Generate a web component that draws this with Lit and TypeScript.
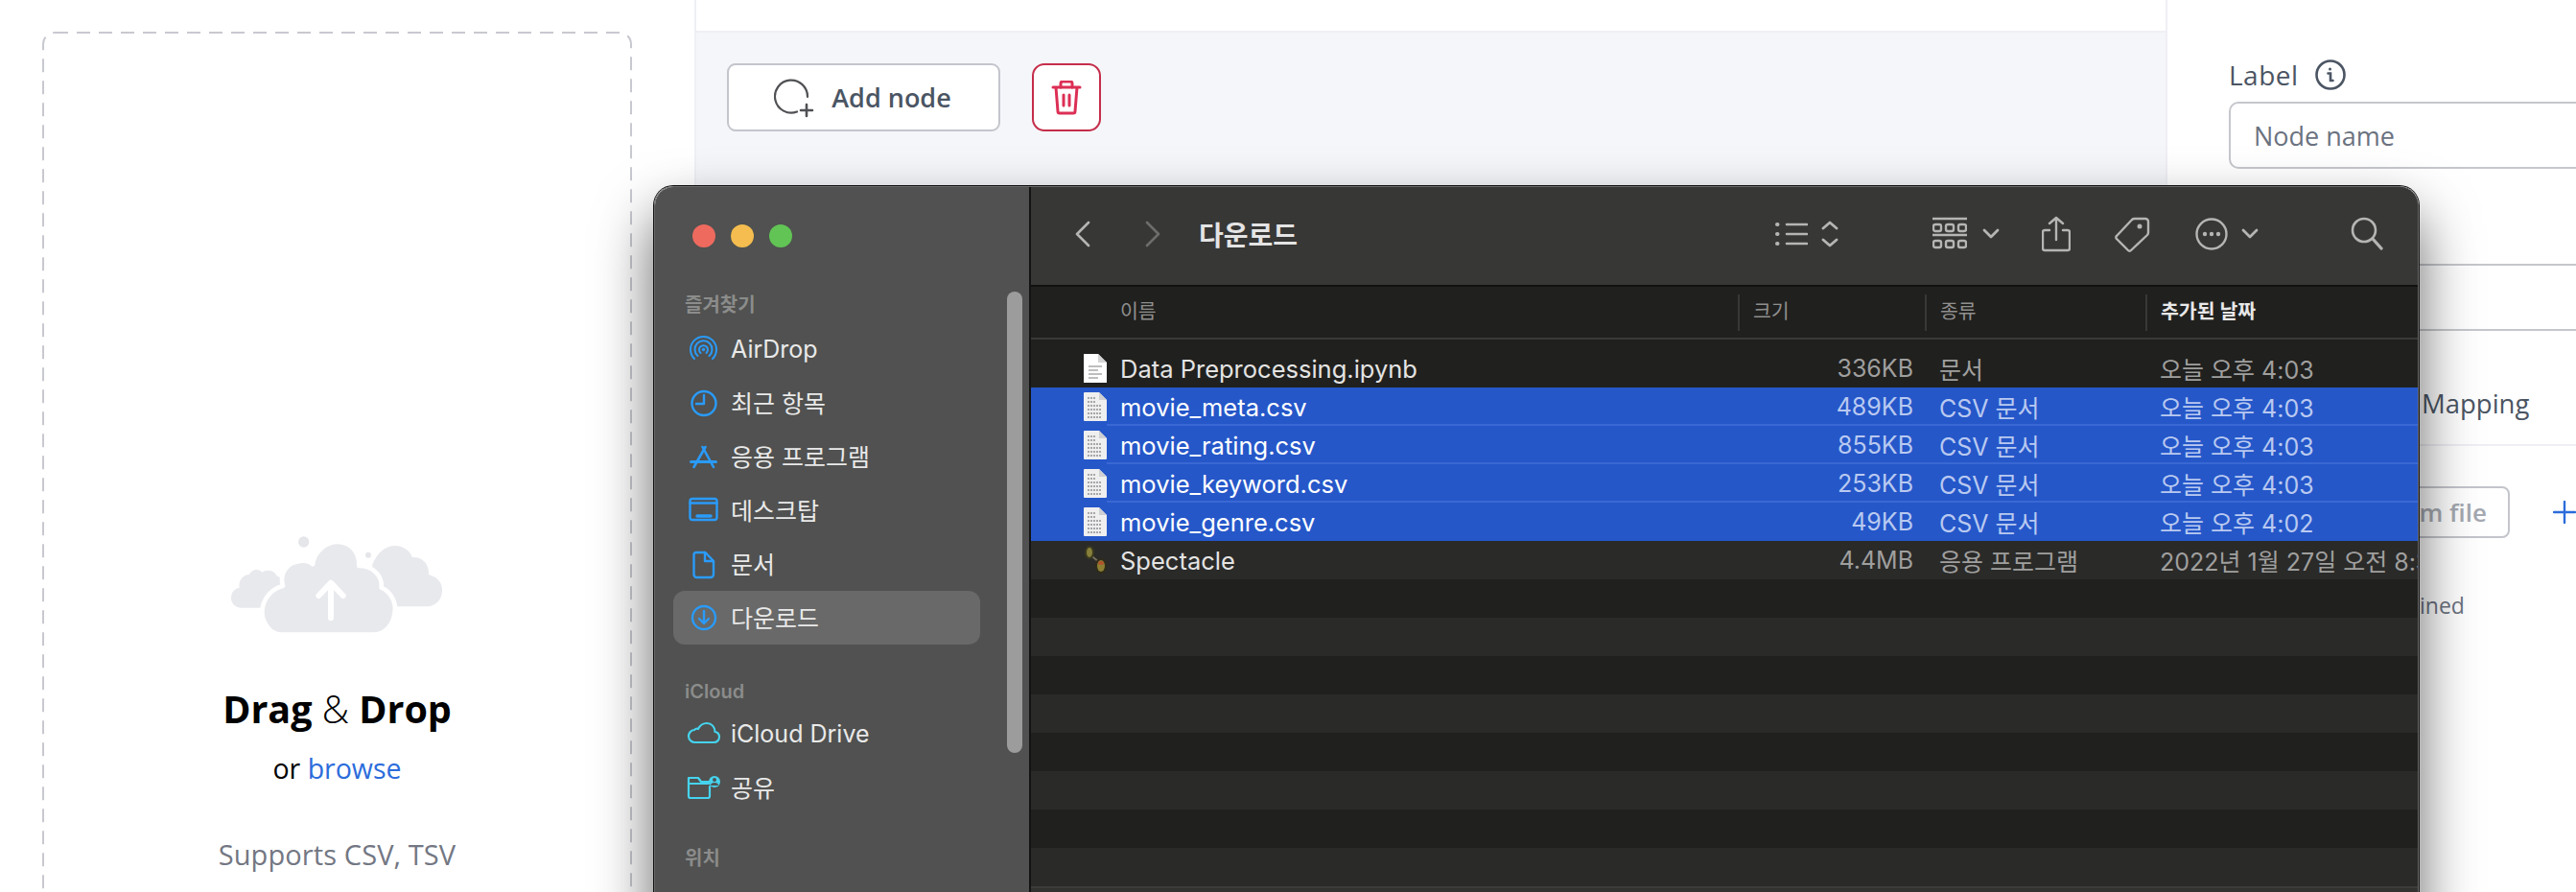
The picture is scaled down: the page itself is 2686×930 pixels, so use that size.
import { LitElement, css, html, svg } from 'lit'
import { customElement } from 'lit/decorators.js'

const ic = (w: number, h: number, body: unknown, cls = '') =>
  html`<svg class=${cls} width=${w} height=${h} viewBox="0 0 ${w} ${h}" fill="none" stroke="currentColor" stroke-linecap="round" stroke-linejoin="round">${body}</svg>`

const sideIcons: Record<string, unknown> = {
  airdrop: svg`<g stroke-width="2"><path d="M12 28A13.500 13.500 0 1 1 31 28"/><path d="M15.500 25A9 9 0 1 1 27.500 25"/><path d="M18.500 22A4.500 4.500 0 1 1 24.500 22"/></g><circle cx="21.500" cy="18.500" r="1.800" fill="currentColor" stroke="none"/>`,
  clock: svg`<g stroke-width="2.400"><circle cx="22" cy="18.500" r="12.500"/><path d="M22 10v9h-8"/></g>`,
  apps: svg`<path stroke-width="2.600" d="M23.500 8L11.500 29M20.500 8L32 29"/><path stroke-width="3" d="M8.500 23.500h26"/>`,
  desktop: svg`<g stroke-width="2.400"><rect x="7.500" y="6" width="28" height="22" rx="2.500"/><path d="M7.500 10.500h28"/><path stroke-width="3.500" d="M15 24h14"/></g>`,
  doc: svg`<g stroke-width="2.400"><path d="M14 6h9.500l8.500 9v14a3 3 0 0 1-3 3H14.500a3 3 0 0 1-3-3V8.500A2.500 2.500 0 0 1 14 6z"/><path d="M23 6v9h9"/></g>`,
  down: svg`<g stroke-width="2.400"><circle cx="22" cy="18" r="12"/><path d="M22 11v13M17 19l5 5 5-5"/></g>`,
  cloud: svg`<path stroke-width="2.200" d="M13 27a6.500 6.500 0 0 1-1-13c1-1 3-1.500 4-1 2-4 5-6 9-6 5 0 8.500 4 8.500 9 3 .5 4.500 3 4.500 5.500 0 3-2.500 5.500-5.500 5.500z"/>`,
  share: svg`<g stroke-width="2.200"><path d="M6 8h10l3 4h8M6 14h21M6 8v19a2 2 0 0 0 2 2h18a2 2 0 0 0 2-2V17"/></g><circle cx="33" cy="12" r="6" fill="currentColor" stroke="none"/><circle cx="33" cy="10" r="2" fill="#505150" stroke="none"/><path d="M29 16a4 3 0 0 1 8 0" fill="#505150" stroke="none"/>`,
}

const favorites = [
  ['airdrop', 'AirDrop'],
  ['clock', '최근 항목'],
  ['apps', '응용 프로그램'],
  ['desktop', '데스크탑'],
  ['doc', '문서'],
  ['down', '다운로드'],
]

const files = [
  { name: 'Data Preprocessing.ipynb', size: '336KB', kind: '문서', date: '오늘 오후 4:03', icon: 'doc' },
  { name: 'movie_meta.csv', size: '489KB', kind: 'CSV 문서', date: '오늘 오후 4:03', icon: 'csv', sel: true },
  { name: 'movie_rating.csv', size: '855KB', kind: 'CSV 문서', date: '오늘 오후 4:03', icon: 'csv', sel: true },
  { name: 'movie_keyword.csv', size: '253KB', kind: 'CSV 문서', date: '오늘 오후 4:03', icon: 'csv', sel: true },
  { name: 'movie_genre.csv', size: '49KB', kind: 'CSV 문서', date: '오늘 오후 4:02', icon: 'csv', sel: true, last: true },
  { name: 'Spectacle', size: '4.4MB', kind: '응용 프로그램', date: '2022년 1월 27일 오전 8:36', icon: 'app', alt: true },
]

const fileIcon = (kind: string) => {
  if (kind === 'app') {
    return html`<svg class="ficon" width="26" height="32" viewBox="0 0 26 32">
      <path d="M6 10l10 8" stroke="#77705a" stroke-width="2" />
      <ellipse cx="6" cy="8" rx="5" ry="7" fill="#3c3a20" />
      <ellipse cx="6" cy="8" rx="3" ry="5" fill="#86803a" />
      <ellipse cx="18" cy="22" rx="6" ry="8" fill="#2f2c1a" />
      <ellipse cx="18" cy="22" rx="4" ry="6" fill="#8c7f34" />
      <ellipse cx="18" cy="19" rx="3" ry="2" fill="#b0562c" />
    </svg>`
  }
  if (kind === 'csv') {
    return html`<svg class="ficon" width="24" height="30" viewBox="0 0 24 30">
      <path d="M0 1a1 1 0 0 1 1-1h15l8 8v21a1 1 0 0 1-1 1H1a1 1 0 0 1-1-1z" fill="#efeff0" />
      <path d="M16 0v8h8z" fill="#cfd0d2" />
      <path d="M4 6h9M4 10h9M4 14h15M4 18h15M4 22h15M4 26h15" stroke="#a6a7a9" stroke-width="2" stroke-dasharray="2 1" />
    </svg>`
  }
  return html`<svg class="ficon" width="24" height="30" viewBox="0 0 24 30">
    <path d="M0 0h15l9 9v21H0z" fill="#fff" />
    <path d="M15 0v9h9z" fill="#d4d4d4" />
    <path d="M5 13h14M5 17h10M5 21h14M5 25h10" stroke="#a9a9a9" stroke-width="1.600" />
  </svg>`
}

@customElement('app-root')
export class AppRoot extends LitElement {
  static styles = css`
    :host {
      display: block;
      position: relative;
      width: 2686px;
      height: 930px;
      overflow: hidden;
      background: #fff;
      font-family: 'Open Sans', 'Noto Sans', sans-serif;
      color: #4b5563;
    }
    .page {
      display: grid;
      grid-template-columns: 724px 1536px 426px;
      height: 930px;
    }
    .left {
      padding: 33px 65px 0 44px;
      overflow: hidden;
    }
    .drop {
      position: relative;
      height: 1000px;
      padding-top: 512px;
      box-sizing: border-box;
      display: flex;
      flex-direction: column;
      align-items: center;
      color: #000;
    }
    .dash {
      position: absolute;
      inset: 0;
      width: 100%;
      height: 100%;
    }
    .cloud {
      display: block;
      margin: 0 4px 52px 0;
    }
    .dd {
      font-size: 39.500px;
      line-height: 44px;
      font-weight: 700;
    }
    .dd span {
      font-weight: 300;
    }
    .or {
      font-size: 28.500px;
      line-height: 36px;
      margin-top: 22px;
    }
    .or span {
      color: #2b6cdb;
    }
    .sup {
      font-size: 29px;
      line-height: 36px;
      margin-top: 54px;
      color: #737783;
      letter-spacing: 0.1px;
    }
    .center {
      border-left: 2px solid #eff0f5;
      border-right: 2px solid #eff0f5;
      background: #f5f6fa;
    }
    .top {
      height: 32px;
      background: #fff;
      border-bottom: 2px solid #eff0f5;
    }
    .btns {
      display: flex;
      gap: 33px;
      padding: 32px 0 0 32px;
    }
    .add,
    .del {
      height: 71px;
      box-sizing: border-box;
      background: #fff;
      display: flex;
      align-items: center;
      justify-content: center;
    }
    .add {
      width: 285px;
      border: 2px solid #c4c5cc;
      border-radius: 9px;
      gap: 18px;
      font-size: 27px;
      font-weight: 600;
      color: #4b5563;
      padding-right: 2px;
    }
    .del {
      width: 72px;
      border: 2px solid #c52d4a;
      border-radius: 13px;
      color: #dc2f55;
    }
    .right {
      overflow: hidden;
    }
    .field {
      padding: 64px 0 0 64px;
    }
    .lab {
      display: flex;
      align-items: center;
      gap: 17px;
      height: 28px;
      font-size: 28px;
      letter-spacing: 0.500px;
      margin-bottom: 14px;
    }
    .inp {
      width: 500px;
      height: 70px;
      box-sizing: border-box;
      border: 2px solid #c6c7cc;
      border-radius: 10px;
      padding-left: 24px;
      display: flex;
      align-items: center;
      font-size: 27px;
      color: #6b7280;
    }
    .inp2 {
      margin-top: 99px;
    }
    .tab {
      height: 120px;
      box-sizing: border-box;
      border-bottom: 2px solid #eeeff4;
      padding: 32px 0 0 265px;
      display: flex;
      align-items: center;
      font-size: 27.500px;
    }
    .filerow {
      display: flex;
      align-items: center;
      gap: 45px;
      margin-top: 42px;
      padding-left: 140px;
    }
    .from {
      width: 218px;
      height: 54px;
      box-sizing: border-box;
      border: 2px solid #c4c5cc;
      border-radius: 8px;
      display: flex;
      align-items: center;
      justify-content: flex-end;
      padding-right: 22px;
      font-size: 26px;
      font-weight: 600;
      color: #a5a9b1;
    }
    .plus {
      color: #2b6cdb;
      flex: none;
    }
    .ined {
      padding: 55px 0 0 263px;
      font-size: 23px;
      line-height: 30px;
      color: #6b7280;
    }

    /* finder window */
    .win {
      position: absolute;
      left: 682px;
      top: 194px;
      width: 1840px;
      height: 800px;
      box-sizing: border-box;
      border: 1px solid #6a6a6a;
      border-radius: 20px;
      overflow: hidden;
      display: flex;
      font-family: Inter, 'Noto Sans CJK KR', sans-serif;
      box-shadow: 0 0 0 1px #111, 0 30px 60px rgba(0, 0, 0, 0.62);
    }
    .side {
      position: relative;
      width: 390px;
      flex: none;
      background: #505150;
      border-right: 2px solid #131313;
    }
    .lights {
      display: flex;
      gap: 16px;
      padding: 39px 0 0 39px;
    }
    .lights i {
      width: 24px;
      height: 24px;
      border-radius: 50%;
    }
    .s-label {
      height: 28px;
      line-height: 28px;
      margin: 0 0 2px 31px;
      font-size: 20px;
      font-weight: 600;
      color: #8b8c8b;
    }
    .fav {
      margin-top: 46px;
      margin-bottom: 4px;
    }
    .icl {
      margin-top: 35px;
    }
    .loc {
      margin-top: 32px;
    }
    .item {
      display: flex;
      align-items: center;
      gap: 6px;
      width: 320px;
      height: 56px;
      margin-left: 19px;
      padding-left: 10px;
      box-sizing: border-box;
      border-radius: 12px;
      font-size: 25px;
      color: #e9e9e9;
    }
    .item svg {
      color: #2a9bfa;
      flex: none;
    }
    .item.teal svg {
      color: #46d3ef;
    }
    .item.on {
      background: #686968;
    }
    .ko {
      padding-bottom: 3px;
    }
    .thumb {
      position: absolute;
      left: 367px;
      top: 109px;
      width: 16px;
      height: 481px;
      border-radius: 8px;
      background: #9b9c9b;
    }
    .main {
      flex: 1;
      min-width: 0;
      background: #20201e;
      display: flex;
      flex-direction: column;
    }
    .bar {
      height: 104px;
      flex: none;
      box-sizing: border-box;
      background: #373736;
      border-bottom: 2px solid #111;
      display: flex;
      align-items: center;
      padding: 0 0 4px 46px;
      color: #b5b5b4;
    }
    .bar svg {
      flex: none;
    }
    .fwd {
      color: #6d6d6c;
      margin-left: 57px;
    }
    .title {
      margin-left: 40px;
      width: 601px;
      font-size: 28px;
      font-weight: 700;
      color: #e4e4e4;
    }
    .chev2 {
      margin-left: 14px;
    }
    .grid {
      margin-left: 98px;
    }
    .chev1 {
      margin-left: 16px;
    }
    .sharei {
      margin-left: 44px;
    }
    .tag {
      margin-left: 46px;
    }
    .more {
      margin-left: 46px;
    }
    .chev3 {
      margin-left: 14px;
    }
    .search {
      margin-left: 96px;
    }
    .head {
      height: 55px;
      flex: none;
      box-sizing: border-box;
      border-bottom: 2px solid #3a3a38;
      display: grid;
      grid-template-columns: 737px 195px 230px 1fr;
      align-items: center;
      font-size: 20.500px;
      color: #8f8f8e;
    }
    .head div {
      height: 38px;
      line-height: 35px;
      box-sizing: border-box;
      padding-left: 14px;
      border-left: 2px solid #383836;
    }
    .head div:first-child {
      border-left: none;
      padding-left: 93px;
    }
    .head .sorted {
      color: #e8e8e8;
      font-weight: 700;
    }
    .rows {
      padding-top: 10px;
    }
    .row {
      height: 40px;
      display: grid;
      grid-template-columns: 55px 38px 647px 180px 27px 230px 1fr;
      align-items: center;
      font-size: 25px;
      white-space: nowrap;
      color: #9f9f9e;
      overflow: hidden;
    }
    .ficon {
      grid-column: 1 / span 2;
      margin-left: 55px;
      display: block;
    }
    .name {
      color: #e4e4e3;
      grid-column: 3;
      font-size: 25.500px;
    }
    .size {
      text-align: right;
      grid-column: 4;
    }
    .kind {
      grid-column: 6;
    }
    .date {
      grid-column: 7;
    }
    .row.sel {
      background: #2557c9 linear-gradient(#3a68d4, #3a68d4) right bottom / calc(100% - 79px) 2px no-repeat;
      color: #b9c9f0;
    }
    .row.last {
      background-image: none;
    }
    .row.sel .name {
      color: #fff;
    }
    .row.alt,
    .stripe.alt {
      background: #2a2a29;
    }
    .stripe {
      height: 40px;
    }
    .status {
      border-top: 2px solid #3c3c3b;
      height: 20px;
      background: #323231;
    }
  `

  render() {
    return html`
      <div class="page">
        <section class="left">
          <div class="drop">
            <svg class="dash">
              <rect x="1" y="1" width="613" height="997" rx="12" fill="none" stroke="#c8c9d0" stroke-width="2" stroke-dasharray="14 9" />
            </svg>
            <svg class="cloud" width="250" height="120" viewBox="0 0 750 360">
              <circle cx="275" cy="60" r="17" fill="#e5e6ea" />
              <circle cx="477" cy="101" r="9" fill="#e5e6ea" />
              <path fill="#e8e9ed" d="M490 262 L490 130 C505 95 530 72 560 72 C590 72 610 92 614 108 C645 105 668 128 666 162 C695 170 710 190 708 215 C706 245 685 262 655 262 Z" />
              <path fill="#e8e9ed" d="M80 266 C60 266 48 250 48 236 C48 215 62 205 74 203 C70 180 85 163 105 162 C112 145 135 143 145 155 C160 143 185 150 190 165 L205 175 L205 266 Z" />
              <path fill="#e8e9ed" stroke="#fff" stroke-width="14" stroke-linejoin="round" d="M205 350 C165 350 145 305 145 280 C145 240 175 205 210 198 C200 165 215 125 265 120 C280 118 295 122 303 130 C310 85 350 60 380 60 C425 60 450 95 448 135 C490 135 522 165 518 203 C545 215 565 245 560 280 C555 320 530 350 490 350 Z" />
              <path fill="none" stroke="#fff" stroke-width="18" stroke-linecap="round" stroke-linejoin="round" d="M360 298V190M322 228L360 188L398 228" />
            </svg>
            <div class="dd">Drag <span>&amp;</span> Drop</div>
            <div class="or">or <span>browse</span></div>
            <div class="sup">Supports CSV, TSV</div>
          </div>
        </section>

        <section class="center">
          <div class="top"></div>
          <div class="btns">
            <div class="add">
              <svg width="42" height="42" viewBox="0 0 42 42" fill="none" stroke="#505154" stroke-width="2.200" stroke-linecap="round">
                <path d="M24 35.500A17 17 0 1 1 35 20" />
                <path stroke-width="2.600" d="M34 28v12M28 34h12" />
              </svg>
              <span>Add node</span>
            </div>
            <div class="del">
              <svg width="32" height="36" viewBox="0 0 32 36" fill="none" stroke="currentColor" stroke-width="3" stroke-linecap="round" stroke-linejoin="round">
                <path d="M2 7h28M5 7l2 25a2 2 0 0 0 2 2h14a2 2 0 0 0 2-2l2-25" />
                <path d="M10 7V3a2 2 0 0 1 2-2h8a2 2 0 0 1 2 2v4M13 15v11M19 15v11" />
              </svg>
            </div>
          </div>
        </section>

        <section class="right">
          <div class="field">
            <div class="lab">
              <span>Label</span>
              <svg width="32" height="32" viewBox="0 0 32 32" fill="none" stroke="#4b5563" stroke-width="2.600">
                <circle cx="16" cy="16" r="14.500" />
                <path stroke-linecap="round" d="M13.500 14.500h2.500v7.500h2.500" />
                <circle cx="15.500" cy="10" r="1.500" fill="#4b5563" stroke="none" />
              </svg>
            </div>
            <div class="inp">Node name</div>
            <div class="inp inp2"></div>
          </div>
          <div class="tab">Mapping</div>
          <div class="filerow">
            <div class="from">m file</div>
            <svg class="plus" width="24" height="24" viewBox="0 0 24 24" fill="none" stroke="currentColor" stroke-width="2.400" stroke-linecap="round">
              <path d="M12 1v22M1 12h22" />
            </svg>
          </div>
          <div class="ined">ined</div>
        </section>
      </div>

      <div class="win">
        <aside class="side">
          <div class="lights">
            <i style="background:#ee6a5f"></i><i style="background:#f5bd4f"></i><i style="background:#61c454"></i>
          </div>
          <div class="s-label fav">즐겨찾기</div>
          ${favorites.map(
            ([k, t]) => html`<div class="item ${t === '다운로드' ? 'on' : ''}">
              ${ic(44, 36, sideIcons[k])}<span class=${k === 'airdrop' ? '' : 'ko'}>${t}</span>
            </div>`,
          )}
          <div class="s-label icl">iCloud</div>
          <div class="item teal">${ic(44, 36, sideIcons.cloud)}<span>iCloud Drive</span></div>
          <div class="item teal">${ic(44, 36, sideIcons.share)}<span class="ko">공유</span></div>
          <div class="s-label loc">위치</div>
          <div class="thumb"></div>
        </aside>

        <div class="main">
          <div class="bar">
            ${ic(16, 28, svg`<path stroke-width="2.600" d="M14 2L2 14l12 12"/>`)}
            ${ic(16, 28, svg`<path stroke-width="2.600" d="M2 2l12 12L2 26"/>`, 'fwd')}
            <div class="title">다운로드</div>
            ${ic(34, 26, svg`<g stroke-width="2.600"><path d="M12 3h21M12 13h21M12 23h21"/><path stroke-width="4" d="M2 3h.5M2 13h.5M2 23h.5"/></g>`)}
            ${ic(18, 30, svg`<path stroke-width="2.800" d="M2 9l7-6 7 6M2 21l7 6 7-6"/>`, 'chev2')}
            ${ic(36, 36, svg`<g stroke-width="2.400"><path d="M0 2h36M0 19h36"/><rect x="1" y="8" width="8" height="7" rx="2"/><rect x="14" y="8" width="8" height="7" rx="2"/><rect x="27" y="8" width="8" height="7" rx="2"/><rect x="1" y="25" width="8" height="7" rx="2"/><rect x="14" y="25" width="8" height="7" rx="2"/><rect x="27" y="25" width="8" height="7" rx="2"/></g>`, 'grid')}
            ${ic(18, 12, svg`<path stroke-width="2.800" d="M2 2l7 7 7-7"/>`, 'chev1')}
            ${ic(30, 38, svg`<g stroke-width="2.400"><path d="M8 15H3a2 2 0 0 0-2 2v17a2 2 0 0 0 2 2h24a2 2 0 0 0 2-2V17a2 2 0 0 0-2-2h-5M15 25V2M8 8l7-6 7 6"/></g>`, 'sharei')}
            ${ic(38, 38, svg`<g stroke-width="2.400"><path d="M21 3h11a3 3 0 0 1 3 3v11a4 4 0 0 1-1 3L17 36a2 2 0 0 1-3 0L2 24a2 2 0 0 1 0-3L18 4a4 4 0 0 1 3-1z"/></g><circle cx="26" cy="11" r="2.500" fill="currentColor" stroke="none"/>`, 'tag')}
            ${ic(34, 34, svg`<circle cx="17" cy="17" r="15.500" stroke-width="2.400"/><circle cx="10" cy="17" r="2.200" fill="currentColor" stroke="none"/><circle cx="17" cy="17" r="2.200" fill="currentColor" stroke="none"/><circle cx="24" cy="17" r="2.200" fill="currentColor" stroke="none"/>`, 'more')}
            ${ic(18, 12, svg`<path stroke-width="2.800" d="M2 2l7 7 7-7"/>`, 'chev3')}
            ${ic(34, 36, svg`<circle cx="14" cy="14" r="12" stroke-width="2.600"/><path stroke-width="3.200" d="M23 23l9 10"/>`, 'search')}
          </div>

          <div class="head">
            <div>이름</div>
            <div>크기</div>
            <div>종류</div>
            <div class="sorted">추가된 날짜</div>
          </div>

          <div class="rows">
            ${files.map(
              (f) => html`<div class="row ${f.sel ? 'sel' : ''} ${f.last ? 'last' : ''} ${f.alt ? 'alt' : ''}">
                ${fileIcon(f.icon)}
                <span class="name">${f.name}</span>
                <span class="size">${f.size}</span>
                <span class="kind">${f.kind}</span>
                <span class="date">${f.date}</span>
              </div>`,
            )}
            ${[0, 1, 2, 3, 4, 5, 6, 7].map((i) => html`<div class="stripe ${i % 2 ? 'alt' : ''}"></div>`)}
          </div>
          <div class="status"></div>
        </div>
      </div>
    `
  }
}
